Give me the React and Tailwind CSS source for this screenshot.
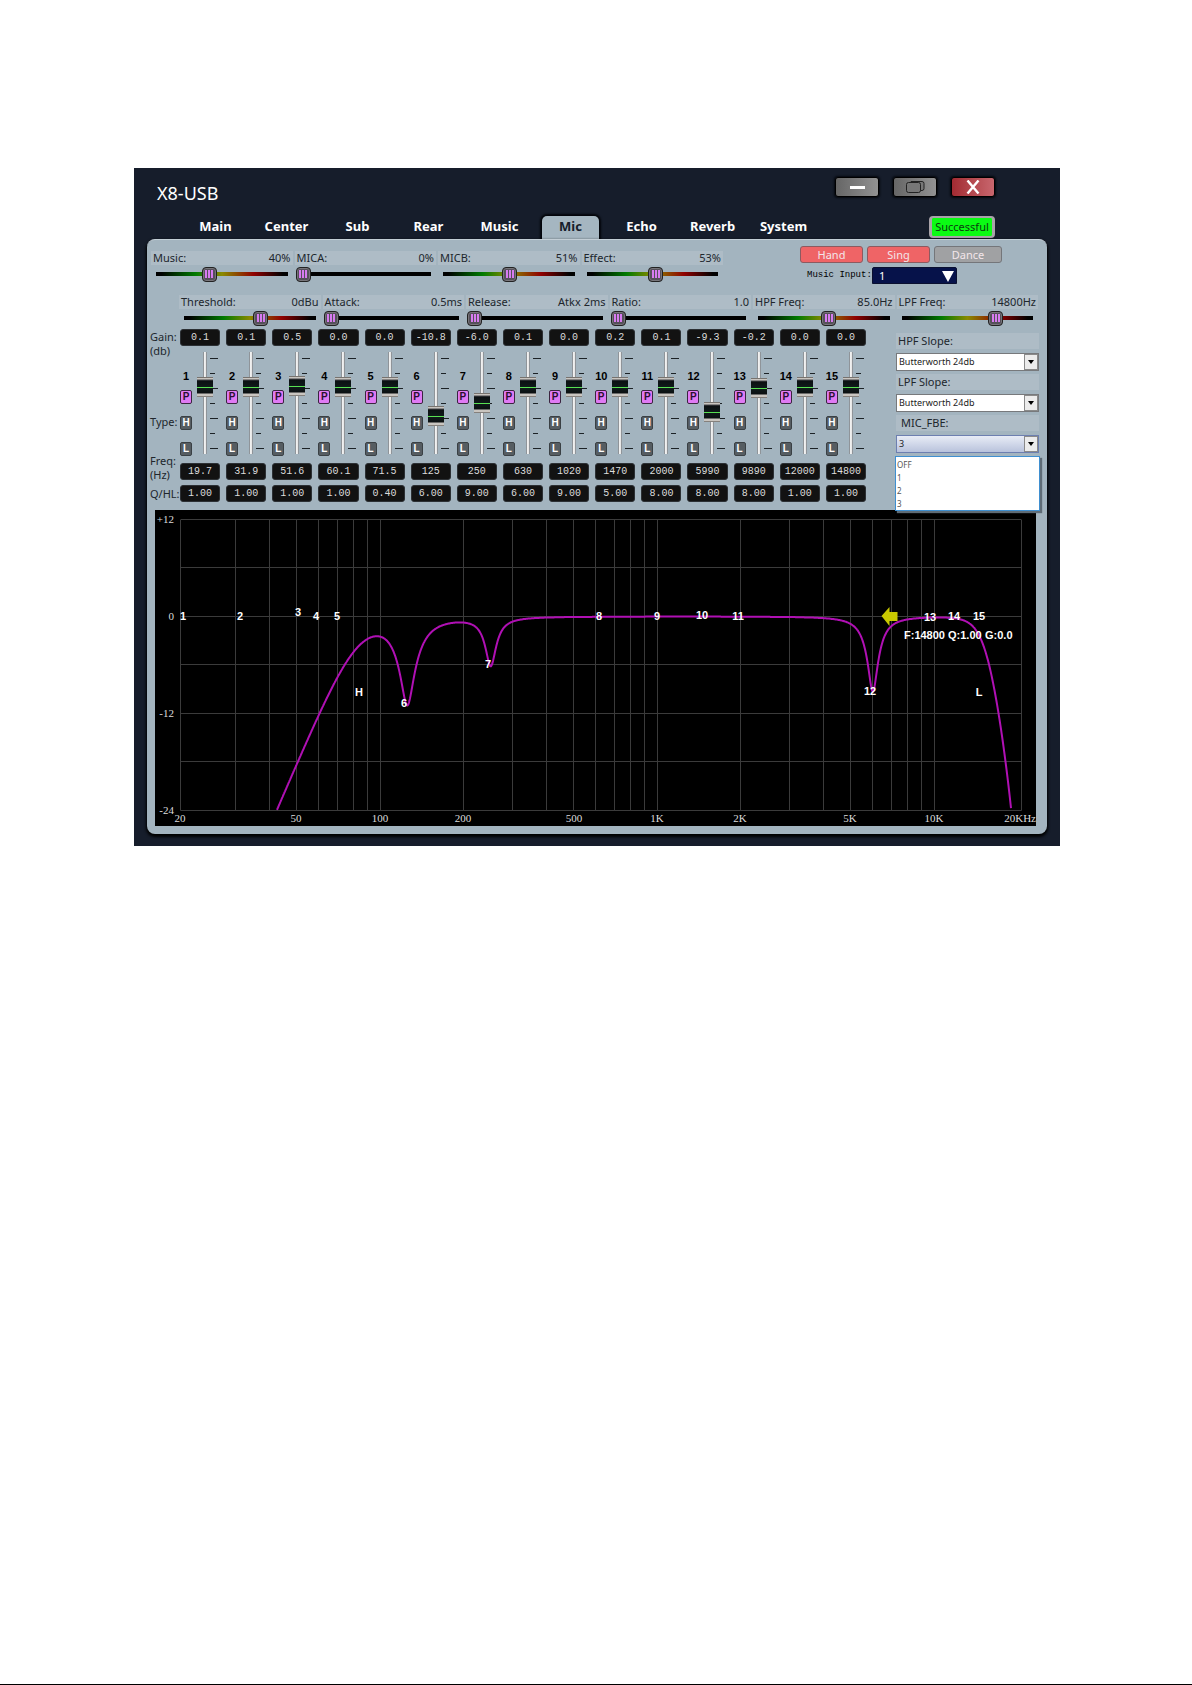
import React from "react";

const TABS = ["Main", "Center", "Sub", "Rear", "Music", "Mic", "Echo", "Reverb", "System"];

const LEVELS = [
  { label: "Music:", text: "40%", value: 40, color: true },
  { label: "MICA:", text: "0%", value: 0 },
  { label: "MICB:", text: "51%", value: 51, color: true },
  { label: "Effect:", text: "53%", value: 53, color: true },
];

const DYNAMICS = [
  { label: "Threshold:", text: "0dBu", value: 59, color: true },
  { label: "Attack:", text: "0.5ms", value: 0 },
  { label: "Release:", text: "Atkx 2ms", value: 0 },
  { label: "Ratio:", text: "1.0", value: 0 },
  { label: "HPF Freq:", text: "85.0Hz", value: 54, color: true },
  { label: "LPF Freq:", text: "14800Hz", value: 73, color: true },
];

const BANDS = [
  ["0.1", "19.7", "1.00"],
  ["0.1", "31.9", "1.00"],
  ["0.5", "51.6", "1.00"],
  ["0.0", "60.1", "1.00"],
  ["0.0", "71.5", "0.40"],
  ["-10.8", "125", "6.00"],
  ["-6.0", "250", "9.00"],
  ["0.1", "630", "6.00"],
  ["0.0", "1020", "9.00"],
  ["0.2", "1470", "5.00"],
  ["0.1", "2000", "8.00"],
  ["-9.3", "5990", "8.00"],
  ["-0.2", "9890", "8.00"],
  ["0.0", "12000", "1.00"],
  ["0.0", "14800", "1.00"],
];

const TICKS = [true, false, true, false, true, false, true];

function LevelSlider({ label, text, value, color }) {
  const track = color
    ? "bg-[linear-gradient(to_right,#000_4%,#007a00_30%,#8a8a00_50%,#900000_74%,#000_96%)]"
    : "bg-[linear-gradient(#000,#000)]";
  return (
    <label className="block min-w-0">
      <span className="mr-0.5 flex h-3.5 items-center justify-between bg-[#aebcc6] pr-0.5 pl-0.5 text-[11px] leading-[14px] whitespace-nowrap text-[#20262c]">
        <span>{label}</span>
        <span>{text}</span>
      </span>
      <input
        type="range"
        min="0"
        max="100"
        defaultValue={value}
        className={
          "mt-px mr-1 ml-px block h-4 w-[calc(100%-4px)] appearance-none bg-[length:calc(100%-8px)_4px] bg-center bg-no-repeat [&::-webkit-slider-thumb]:h-[15px] [&::-webkit-slider-thumb]:w-[15px] [&::-webkit-slider-thumb]:appearance-none [&::-webkit-slider-thumb]:rounded-[4px] [&::-webkit-slider-thumb]:border [&::-webkit-slider-thumb]:border-[#222] [&::-webkit-slider-thumb]:bg-[#55505a] [&::-webkit-slider-thumb]:bg-[linear-gradient(to_right,#d77cf0_2px,transparent_2px,transparent_3px,#d77cf0_3px,#d77cf0_5px,transparent_5px,transparent_6px,#d77cf0_6px)] [&::-webkit-slider-thumb]:bg-[length:8px_8px] [&::-webkit-slider-thumb]:bg-center [&::-webkit-slider-thumb]:bg-no-repeat [&::-webkit-slider-thumb]:shadow-[inset_0_0_0_1px_#77757a] " +
          track
        }
      />
    </label>
  );
}

function ValueBox({ value, name }) {
  return (
    <input
      type="text"
      aria-label={name}
      defaultValue={value}
      className="block h-[17px] w-full min-w-0 rounded-[3px] border border-[#2c3034] bg-[#121212] text-center font-['Liberation_Mono',monospace] text-[10px] leading-[15px] text-[#dcdcdc]"
    />
  );
}

function TypeButton({ children, active }) {
  return (
    <button
      type="button"
      className={
        "h-3.5 w-3 rounded-[2px] border text-center font-['Liberation_Sans',sans-serif] text-[10px] leading-3 font-bold " +
        (active
          ? "border-[#3b2540] bg-[#e07af4] text-[#2a1030]"
          : "border-[#3a4044] bg-[#565d62] text-white")
      }
    >
      {children}
    </button>
  );
}

function Band({ n, gain, freq, q }) {
  return (
    <div className="min-w-0">
      <ValueBox value={gain} name={"Gain " + n} />
      <div className="mb-[3px] flex h-[114px]">
        <div className="flex w-[15px] flex-col pt-6 font-['Liberation_Sans',sans-serif]">
          <span className="h-3 min-w-3 self-start text-center text-[11px] leading-3 font-bold text-black">
            {n}
          </span>
          <div className="flex flex-col gap-3 pt-2">
            <TypeButton active>P</TypeButton>
            <TypeButton>H</TypeButton>
            <TypeButton>L</TypeButton>
          </div>
        </div>
        <input
          type="range"
          aria-label={"Gain fader " + n}
          min="-24"
          max="12"
          step="0.1"
          defaultValue={Number(gain)}
          className="relative z-10 ml-0.5 h-[114px] w-4 shrink-0 appearance-none bg-[linear-gradient(to_right,#8f9499_1px,#f4f4f4_1px,#e4e4e4_3px,#8f9499_3px)] bg-[length:4px_102px] bg-center bg-no-repeat [direction:rtl] [writing-mode:vertical-lr] [&::-webkit-slider-thumb]:h-5 [&::-webkit-slider-thumb]:w-4 [&::-webkit-slider-thumb]:appearance-none [&::-webkit-slider-thumb]:bg-[linear-gradient(#77736f_1px,#c9c5c0_1px,#c9c5c0_2px,#45464a_3px,#0b1012_4px,#0f1a1a_10px,#58e052_10px,#58e052_11px,#0f1a1a_11px,#0b1012_16px,#c9c5c0_17px,#c9c5c0_19px,#85817d_19px)]"
        />
        <div className="mt-3 -ml-[3px] flex h-[91px] flex-col justify-between">
          {TICKS.map((long, i) => (
            <span key={i} className={"h-px bg-[#1c2226] " + (long ? "w-2" : "w-[5px]")} />
          ))}
        </div>
      </div>
      <ValueBox value={freq} name={"Frequency " + n} />
      <div className="mt-[5px]">
        <ValueBox value={q} name={"Q " + n} />
      </div>
    </div>
  );
}

function SlopeSelect({ id, label, value, open, options }) {
  return (
    <div>
      <label
        htmlFor={id}
        className={
          "block h-4 bg-[#aebcc6] text-[11px] leading-4 text-[#20262c] " + (open ? "pl-[5px]" : "pl-0.5")
        }
      >
        {label}
      </label>
      <div className="relative mt-1">
        <select
          id={id}
          defaultValue={value}
          className={
            "block h-[18px] w-full appearance-none border pl-0.5 text-[9px] leading-4 text-[#222] " +
            (open
              ? "border-[#6d7fb0] bg-linear-to-b from-[#e8ecf6] to-[#b9c3dc]"
              : "border-[#77797c] bg-white")
          }
        >
          {options.map((o) => (
            <option key={o}>{o}</option>
          ))}
        </select>
        <span className="pointer-events-none absolute top-px right-px flex h-4 w-3.5 items-center justify-center border border-[#8a8a8a] bg-[#ececec]">
          <svg viewBox="0 0 6 4" className="h-1 w-1.5">
            <path d="M0 0h6L3 4z" fill="#000" />
          </svg>
        </span>
        {open && (
          <ul className="absolute top-[21px] -right-px -left-px z-20 border border-[#3f8fd0] bg-white pt-px pl-px text-[8px] leading-[13px] text-[#555] shadow-[2px_2px_1px_#5f6c76]">
            {["OFF", "1", "2", "3"].map((o) => (
              <li key={o}>{o}</li>
            ))}
          </ul>
        )}
      </div>
    </div>
  );
}

const LEFT = 25.5;
const RIGHT = 866.5;
const TOP = 10;
const ZERO = 106.5;
const DB = 97 / 12;

const xOf = (f) => 225.5 + 277 * Math.log10(f / 100);
const yOf = (db) => ZERO - db * DB;
const warp = (f) => Math.tan((Math.PI * f) / 48000);

function response(f) {
  const w = warp(f);
  let db =
    -10 * Math.log10(1 + Math.pow(warp(84) / w, 8)) -
    10 * Math.log10(1 + Math.pow(w / warp(14800), 8));
  for (const [g, f0, q] of BANDS.filter(([gain]) => Math.abs(Number(gain)) > 1)) {
    const a = Math.pow(10, Number(g) / 40);
    const r = w / warp(Number(f0));
    const d = Math.pow(1 - r * r, 2);
    db += 10 * Math.log10((d + Math.pow((r * a) / q, 2)) / (d + Math.pow(r / (a * q), 2)));
  }
  return db;
}

function curvePoints() {
  const pts = [];
  for (let x = LEFT; x <= RIGHT; x += 0.5) {
    const db = response(100 * Math.pow(10, (x - 225.5) / 277));
    if (db >= -24) pts.push(x.toFixed(1) + "," + yOf(db).toFixed(1));
  }
  return pts.join(" ");
}

const GRID_FREQS = [30, 40, 50, 60, 70, 80, 90, 100, 200, 300, 400, 500, 600, 700, 800, 900, 1000, 2000, 3000, 4000, 5000, 6000, 7000, 8000, 9000, 10000];

const MARKERS = [
  ["1", 28, 106], ["2", 85, 106], ["3", 143, 102], ["4", 161, 106], ["5", 182, 106],
  ["6", 249, 193], ["7", 333, 154], ["8", 444, 106], ["9", 502, 106], ["10", 547, 105],
  ["11", 583, 106], ["12", 715, 181], ["13", 775, 107], ["14", 799, 106], ["15", 824, 106],
  ["H", 204, 182], ["L", 824, 182],
];

const X_LABELS = [
  ["20", 25], ["50", 141], ["100", 225], ["200", 308], ["500", 419], ["1K", 502],
  ["2K", 585], ["5K", 695], ["10K", 779],
];

function ResponseChart() {
  return (
    <svg viewBox="0 0 881 316" className="block h-auto w-full bg-black" role="img" aria-label="Frequency response">
      <g stroke="#3b3b3b" strokeWidth="1">
        {[12, 6, 0, -6, -12, -18, -24].map((db) => {
          const y = Math.round(yOf(db)) - 0.5;
          return <line key={db} x1={LEFT} x2={RIGHT} y1={y} y2={y} />;
        })}
        {[LEFT, ...GRID_FREQS.map((f) => Math.round(xOf(f)) - 0.5), RIGHT].map((x) => (
          <line key={x} x1={x} x2={x} y1={TOP} y2={yOf(-24)} />
        ))}
      </g>
      <polyline points={curvePoints()} fill="none" stroke="#b010b4" strokeWidth="2" />
      <path d="M726.500 106l8-9v5h8v9h-8v5z" fill="#c8c800" />
      <g fill="#dcdcdc" fontFamily="'Liberation Serif', serif" fontSize="11">
        {[["+12", 13], ["0", 110], ["-12", 207], ["-24", 304]].map(([t, y]) => (
          <text key={t} x="19" y={y} textAnchor="end">{t}</text>
        ))}
        {X_LABELS.map(([t, x]) => (
          <text key={t} x={x} y="312" textAnchor="middle">{t}</text>
        ))}
        <text x="881" y="312" textAnchor="end">20KHz</text>
      </g>
      <g fill="#fff" fontFamily="'Liberation Sans', sans-serif" fontSize="11" fontWeight="700">
        {MARKERS.map(([t, x, y]) => (
          <text key={t} x={x} y={y + 4} textAnchor="middle">{t}</text>
        ))}
        <text x="749" y="129">F:14800</text>
        <text x="793" y="129">Q:1.00</text>
        <text x="830" y="129">G:0.0</text>
      </g>
    </svg>
  );
}

const SLOPES = ["Butterworth 24db"];

export default function App() {
  return (
    <div className="flex min-h-screen flex-col justify-between border-b border-black bg-white font-['Noto_Sans','Open_Sans',sans-serif]">
      <main className="pt-[168px] pr-[132px] pl-[134px]">
        <div className="bg-[#161d2b] pb-3">
          <header className="flex h-12 items-start justify-between pt-[9px] pr-[65px] pl-[23px]">
            <h1 className="mt-1 text-[18px] leading-6 text-white">X8-USB</h1>
            <div className="flex gap-[14px]">
              <button type="button" aria-label="Minimize" className="flex h-5 w-[44px] items-center justify-center rounded-[3px] border border-black bg-linear-to-r from-[#666] to-[#929292] shadow-[0_0_2px_1px_#05080e]">
                <span className="h-[3px] w-[15px] bg-white" />
              </button>
              <button type="button" aria-label="Restore" className="flex h-5 w-[44px] items-center justify-center rounded-[3px] border border-black bg-linear-to-r from-[#666] to-[#929292] shadow-[0_0_2px_1px_#05080e]">
                <svg viewBox="0 0 20 14" className="h-3.5 w-5" fill="#777" stroke="#222">
                  <path d="M6 1.500h11q2 0 2 2v5q0 2-2 2H6z" />
                  <rect x="1.500" y="2.500" width="14" height="10" rx="2" />
                </svg>
              </button>
              <button type="button" aria-label="Close" className="flex h-5 w-[44px] items-center justify-center rounded-[3px] border border-black bg-linear-to-r from-[#a22a32] to-[#c8666e] shadow-[0_0_2px_1px_#05080e]">
                <svg viewBox="0 0 14 14" className="size-3.5" stroke="#fff" strokeWidth="2.400">
                  <path d="M1.500 0.500l11 13M12.500 0.500l-11 13" />
                </svg>
              </button>
            </div>
          </header>

          <div className="flex h-[23px] justify-between pr-[65px] pl-[46px]">
            <nav className="flex text-[13px] leading-[21px] font-bold text-white">
              {TABS.map((t) => (
                <button key={t} type="button" className="flex w-[71px] justify-center px-[7px] font-bold">
                  <span
                    className={
                      t === "Mic"
                        ? "h-[23px] w-full rounded-t-[5px] bg-[#a5b6c1] text-[#161d2b] shadow-[0_0_2px_2px_#03050a]"
                        : ""
                    }
                  >
                    {t}
                  </span>
                </button>
              ))}
            </nav>
            <button type="button" className="h-[22px] w-[66px] rounded-[4px] border-3 border-y-2 border-[#a9a3a9] bg-[#0bfb14] text-[11px] leading-4 text-[#0b3a10]">
              Successful
            </button>
          </div>

          <section className="relative mx-[13px] rounded-lg border-t border-[#c3ced6] bg-[#a3b4bf] px-2 pt-1.5 pb-2 shadow-[0_2px_3px_1px_#000]">
            <div className="-ml-1 flex justify-between">
              <div className="grid w-[574px] grid-cols-4 pt-[5px]">
                {LEVELS.map((s) => (
                  <LevelSlider key={s.label} {...s} />
                ))}
              </div>
              <div className="mr-[37px] w-[202px]">
                <div className="flex gap-1 text-[11px] leading-[15px] text-[#f3e6ea]">
                  <button type="button" className="h-[17px] w-[63px] rounded-[3px] border border-[#8c5a60] bg-[#ef6466]">Hand</button>
                  <button type="button" className="h-[17px] w-[63px] rounded-[3px] border border-[#8c5a60] bg-[#ef6466]">Sing</button>
                  <button type="button" className="h-[17px] flex-1 rounded-[3px] border border-[#74767a] bg-[#a0a1a3]">Dance</button>
                </div>
                <div className="mt-1 flex items-center pl-[7px]">
                  <label htmlFor="input" className="w-[65px] font-['Liberation_Mono',monospace] text-[9px] leading-[17px] whitespace-nowrap text-black">
                    Music Input:
                  </label>
                  <div className="relative">
                    <select id="input" className="block h-[17px] w-[85px] appearance-none rounded-t-[2px] border border-[#0a1030] bg-[#06124a] pl-1.5 text-[11px] leading-[15px] text-white">
                      <option>1</option>
                    </select>
                    <svg viewBox="0 0 12 11" className="pointer-events-none absolute top-1 right-[3px] h-[11px] w-3">
                      <path d="M0 0h12L6 11z" fill="#fff" />
                    </svg>
                  </div>
                </div>
              </div>
            </div>

            <div className="mt-[11px] -mr-px ml-6 grid grid-cols-6">
              {DYNAMICS.map((s) => (
                <LevelSlider key={s.label} {...s} />
              ))}
            </div>

            <div className="mt-[3px] flex">
              <div className="-ml-[5px] w-[30px] shrink-0 pt-px text-[11px] leading-[14px] text-[#20262c]">
                <p>Gain:</p>
                <p>(db)</p>
                <p className="mt-[57px]">Type:</p>
                <p className="mt-[25px]">Freq:</p>
                <p>(Hz)</p>
                <p className="mt-[5px]">Q/HL:</p>
              </div>
              <div className="grid flex-1 grid-cols-15 gap-1.5">
                {BANDS.map(([g, f, q], i) => (
                  <Band key={i} n={i + 1} gain={g} freq={f} q={q} />
                ))}
              </div>
              <div className="ml-[30px] flex w-[143px] shrink-0 flex-col gap-[3px] pt-1">
                <SlopeSelect id="hpf" label="HPF Slope:" value="Butterworth 24db" options={SLOPES} />
                <SlopeSelect id="lpf" label="LPF Slope:" value="Butterworth 24db" options={SLOPES} />
                <SlopeSelect id="fbe" label="MIC_FBE:" value="3" open options={["OFF", "1", "2", "3"]} />
              </div>
            </div>

            <div className="mt-2 mr-[3px]">
              <ResponseChart />
            </div>
          </section>
        </div>
      </main>
    </div>
  );
}
